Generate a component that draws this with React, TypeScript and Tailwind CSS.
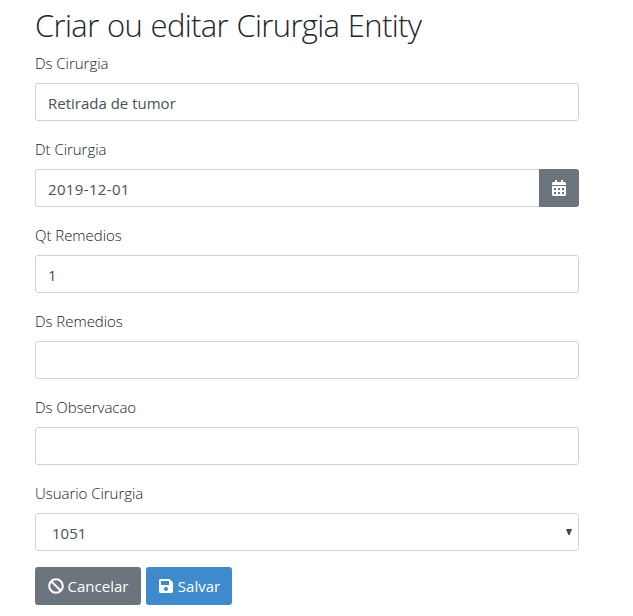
import { useState } from "react";
import { FaBan, FaCalendarAlt, FaSave } from "react-icons/fa";

const inputClass =
  "block h-[38px] w-full min-w-0 rounded-[3px] border border-[#ced4da] bg-white px-3 pt-[2px] text-[15px] leading-6 text-[#495057] outline-none";

function Field({ id, label, value }: { id: string; label: string; value: string }) {
  const [text, setText] = useState(value);
  return (
    <div className="mb-4">
      <Label id={id} text={label} />
      <input id={id} className={inputClass} value={text} onChange={(e) => setText(e.target.value)} />
    </div>
  );
}

function Label({ id, text }: { id: string; text: string }) {
  return (
    <label htmlFor={id} className="mb-2 block text-[15px] font-light leading-6 tracking-[-0.04px] text-[#16191c]">
      {text}
    </label>
  );
}

export default function App() {
  return (
    <div className="min-h-screen bg-white pl-[35px] pt-[7px] font-['Open_Sans','Noto_Sans',sans-serif] font-[380] text-[#212529]">
      <form className="w-[544px]">
        <h2 className="mb-2 whitespace-nowrap text-[31px] font-light leading-9 tracking-[-0.65px] [word-spacing:1px]">
          Criar ou editar Cirurgia Entity
        </h2>
        <Field id="dsCirurgia" label="Ds Cirurgia" value="Retirada de tumor" />
        <div className="mb-4">
          <Label id="dtCirurgia" text="Dt Cirurgia" />
          <div className="flex">
            <input
              id="dtCirurgia"
              defaultValue="2019-12-01"
              className="block h-[38px] min-w-0 flex-1 rounded-l-[3px] border border-r-0 border-[#ced4da] bg-white px-3 pt-[2px] text-[15px] leading-6 tracking-[0.35px] text-[#495057] outline-none"
            />
            <button
              type="button"
              aria-label="Calendar"
              className="flex h-[38px] w-10 items-center justify-center rounded-r-[3px] bg-[#6c757d] text-white"
            >
              <FaCalendarAlt size={16} />
            </button>
          </div>
        </div>
        <Field id="qtRemedios" label="Qt Remedios" value="1" />
        <Field id="dsRemedios" label="Ds Remedios" value="" />
        <Field id="dsObservacao" label="Ds Observacao" value="" />
        <div className="mb-4">
          <Label id="usuario" text="Usuario Cirurgia" />
          <button
            id="usuario"
            type="button"
            className="flex h-[38px] w-full items-center justify-between rounded-[3px] border border-[#ced4da] bg-white pl-4 pr-[6px] text-[15px] leading-6 text-[#495057]"
          >
            <span className="pt-[2px]">1051</span>
            <svg width="6" height="6" viewBox="0 0 6 6" className="mb-px fill-[#3f464d]">
              <path d="M0 0h6L3.6 6H2.4z" />
            </svg>
          </button>
        </div>
        <div className="flex gap-[5px]">
          <button
            type="button"
            className="flex h-[38px] w-[106px] items-center justify-center gap-1 rounded-[3px] bg-[#6c757d] text-[15px] leading-6 text-white"
          >
            <FaBan size={16} />
            <span>Cancelar</span>
          </button>
          <button
            type="button"
            className="flex h-[38px] w-[86px] items-center justify-center gap-1 rounded-[3px] bg-[#3e8acc] text-[15px] leading-6 text-white"
          >
            <FaSave size={16} />
            <span>Salvar</span>
          </button>
        </div>
      </form>
    </div>
  );
}
